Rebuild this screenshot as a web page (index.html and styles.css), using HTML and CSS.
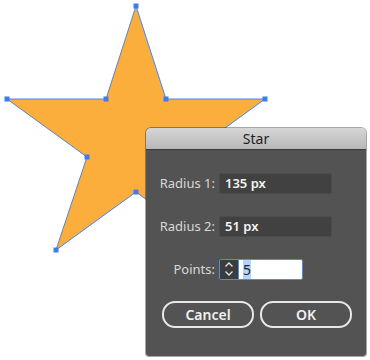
FILE: index.html
```html
<!DOCTYPE html>
<html lang="en">
<head>
    <meta charset="UTF-8">
    <meta name="viewport" content="width=device-width, initial-scale=1.0">
    <title>Star</title>
    <link rel="stylesheet" href="styles.css">
</head>
<body>
    <div class="canvas">
        <svg class="artwork" width="370" height="360" viewBox="0 0 370 360">
            <polygon class="star" points="136,6 166,99 265,99 185,157 216,250 136,192 56,250 87,157 7,99 106,99"/>
            <g class="anchors">
                <rect x="133.5" y="3.5" width="5" height="5"/>
                <rect x="163.5" y="96.5" width="5" height="5"/>
                <rect x="262.5" y="96.5" width="5" height="5"/>
                <rect x="182.5" y="154.5" width="5" height="5"/>
                <rect x="213.5" y="247.5" width="5" height="5"/>
                <rect x="133.5" y="189.5" width="5" height="5"/>
                <rect x="53.5" y="247.5" width="5" height="5"/>
                <rect x="84.5" y="154.5" width="5" height="5"/>
                <rect x="4.5" y="96.5" width="5" height="5"/>
                <rect x="103.5" y="96.5" width="5" height="5"/>
            </g>
        </svg>

        <div class="dialog">
            <div class="dialog-title">Star</div>
            <div class="dialog-body">
                <div class="row">
                    <label for="radius1">Radius 1:</label>
                    <div class="field" id="radius1">135 px</div>
                </div>
                <div class="row">
                    <label for="radius2">Radius 2:</label>
                    <div class="field" id="radius2">51 px</div>
                </div>
                <div class="row">
                    <label for="points">Points:</label>
                    <div class="stepper">
                        <div class="stepper-arrows">
                            <svg width="12" height="18" viewBox="0 0 12 18">
                                <path d="M2.5 6.5 L6 3 L9.5 6.5 M2.5 11.5 L6 15 L9.5 11.5" fill="none" stroke="#e6e6e6" stroke-width="1.3"/>
                            </svg>
                        </div>
                        <div class="stepper-value" id="points"><span class="selected">5</span></div>
                    </div>
                </div>
                <div class="buttons">
                    <button class="btn">Cancel</button>
                    <button class="btn">OK</button>
                </div>
            </div>
        </div>
    </div>
</body>
</html>
```

FILE: styles.css
```css
body {
    margin: 0;
    padding: 0;
    background-color: #ffffff;
    font-family: 'Noto Sans', 'DejaVu Sans', sans-serif;
}
.canvas {
    position: relative;
    width: 370px;
    height: 360px;
    overflow: hidden;
}
.artwork {
    display: block;
}
.star {
    fill: #fbae3c;
    stroke: #4a86e8;
    stroke-width: 1;
}
.anchors rect {
    fill: #3b7cf2;
}
.dialog {
    position: absolute;
    left: 146px;
    top: 128px;
    width: 220px;
    height: 228px;
    border-radius: 5px 5px 3px 3px;
    overflow: hidden;
    box-shadow: 0 0 0 1px rgba(0, 0, 0, 0.35);
    display: flex;
    flex-direction: column;
}
.dialog-title {
    height: 21px;
    line-height: 21px;
    text-align: center;
    font-size: 14px;
    color: #1e1e1e;
    background: linear-gradient(#d6d6d6, #b8b8b8);
    border-bottom: 1px solid #3a3a3a;
}
.dialog-body {
    flex: 1;
    background-color: #535353;
    padding: 22px 0 0 0;
    display: flex;
    flex-direction: column;
}
.row {
    display: flex;
    align-items: center;
    height: 22px;
    margin-bottom: 21px;
}
.row label {
    width: 69px;
    text-align: right;
    padding-right: 4px;
    font-size: 13px;
    color: #d8d8d8;
}
.field {
    height: 21px;
    line-height: 19px;
    padding-left: 5px;
    box-sizing: border-box;
    width: 113px;
    background-color: #414141;
    border: 1px solid #4b4b4b;
    border-radius: 2px;
    font-size: 13px;
    font-weight: 600;
    color: #f4f4f4;
}
.stepper {
    display: flex;
    height: 21px;
    width: 84px;
    border: 1px solid #4a90e2;
    border-radius: 2px;
    box-sizing: border-box;
    overflow: hidden;
}
.stepper-arrows {
    width: 18px;
    background-color: #3c3c3c;
    border-right: 1px solid #4a90e2;
    display: flex;
    align-items: center;
    justify-content: center;
}
.stepper-value {
    flex: 1;
    background-color: #ffffff;
    padding-left: 4px;
    font-size: 14px;
    line-height: 19px;
    color: #222222;
}
.selected {
    background-color: #b3d4fc;
}
.buttons {
    display: flex;
    gap: 6px;
    padding-left: 16px;
    margin-top: 0;
}
.btn {
    width: 92px;
    height: 27px;
    border: 2px solid #e8e8e8;
    border-radius: 13px;
    background-color: #535353;
    color: #f0f0f0;
    font-family: 'Noto Sans', 'DejaVu Sans', sans-serif;
    font-size: 14px;
    font-weight: 600;
    padding: 0;
}
```
